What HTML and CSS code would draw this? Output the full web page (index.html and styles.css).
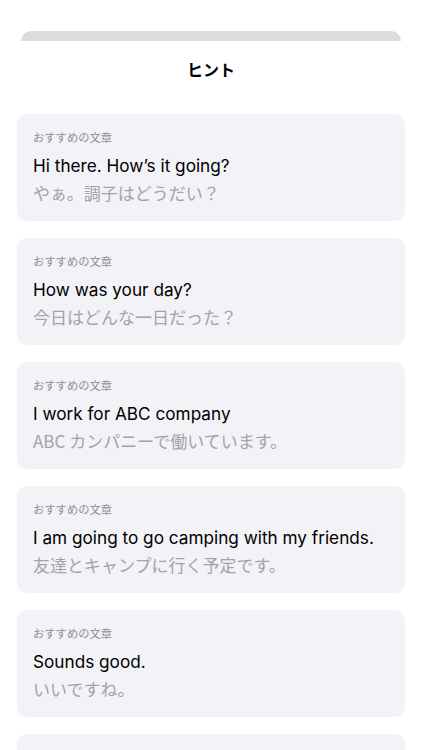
FILE: index.html
```html
<!DOCTYPE html>
<html lang="ja">
<head>
  <meta charset="UTF-8">
  <title>ヒント</title>
  <meta name="viewport" content="width=device-width,initial-scale=1">
  <link rel="stylesheet" href="styles.css">
</head>
<body>

<!-- sheet behind -->
<div class="back-sheet"></div>

<div class="sheet">
  <h1 class="sheet-title">ヒント</h1>

  <div class="hint-list">
    <div class="hint-card">
      <div class="hint-label">おすすめの文章</div>
      <div class="hint-en">Hi there. How’s it going?</div>
      <div class="hint-ja">やぁ。調子はどうだい？</div>
    </div>
    <div class="hint-card">
      <div class="hint-label">おすすめの文章</div>
      <div class="hint-en">How was your day?</div>
      <div class="hint-ja">今日はどんな一日だった？</div>
    </div>
    <div class="hint-card">
      <div class="hint-label">おすすめの文章</div>
      <div class="hint-en">I work for ABC company</div>
      <div class="hint-ja">ABC カンパニーで働いています。</div>
    </div>
    <div class="hint-card">
      <div class="hint-label">おすすめの文章</div>
      <div class="hint-en">I am going to go camping with my friends.</div>
      <div class="hint-ja">友達とキャンプに行く予定です。</div>
    </div>
    <div class="hint-card">
      <div class="hint-label">おすすめの文章</div>
      <div class="hint-en">Sounds good.</div>
      <div class="hint-ja">いいですね。</div>
    </div>
    <!-- next card, scrolled below the fold -->
    <div class="hint-card"></div>
  </div>
</div>

</body>
</html>
```

FILE: styles.css
```css
html, body { margin: 0; padding: 0; background: #fff; }
body {
  font-family: Inter, "Noto Sans CJK JP", sans-serif;
  height: 750px;
  overflow: hidden;
}
.back-sheet {
  margin: 31px 21px 0 21px;
  height: 10px;
  background: #dcdcdd;
  border-radius: 10px 10px 0 0;
}
.sheet { background: #fff; padding: 0 17px; }
.sheet-title {
  margin: 0;
  padding: 16px 0 0 0;
  height: 55px;
  box-sizing: border-box;
  text-align: center;
  font-size: 16px;
  font-weight: bold;
  color: #000;
  font-family: "Noto Sans CJK JP", sans-serif;
}
.hint-list {
  display: flex;
  flex-direction: column;
  gap: 17px;
  padding-top: 18px;
}
.hint-card {
  background: #f2f2f7;
  border-radius: 10px;
  height: 107px;
  flex-shrink: 0;
  box-sizing: border-box;
  padding: 15px 16px 0 16px;
}
.hint-label {
  font-family: "Noto Sans CJK JP", sans-serif;
  font-size: 11.3px;
  font-weight: 400;
  line-height: 16px;
  color: #8e8e93;
}
.hint-en {
  font-size: 17.2px;
  line-height: 22px;
  margin-top: 10px;
  color: #000;
}
.hint-ja {
  font-family: "Noto Sans CJK JP", sans-serif;
  font-size: 17px;
  line-height: 24px;
  margin-top: 4px;
  color: #a3a3a8;
}
```
